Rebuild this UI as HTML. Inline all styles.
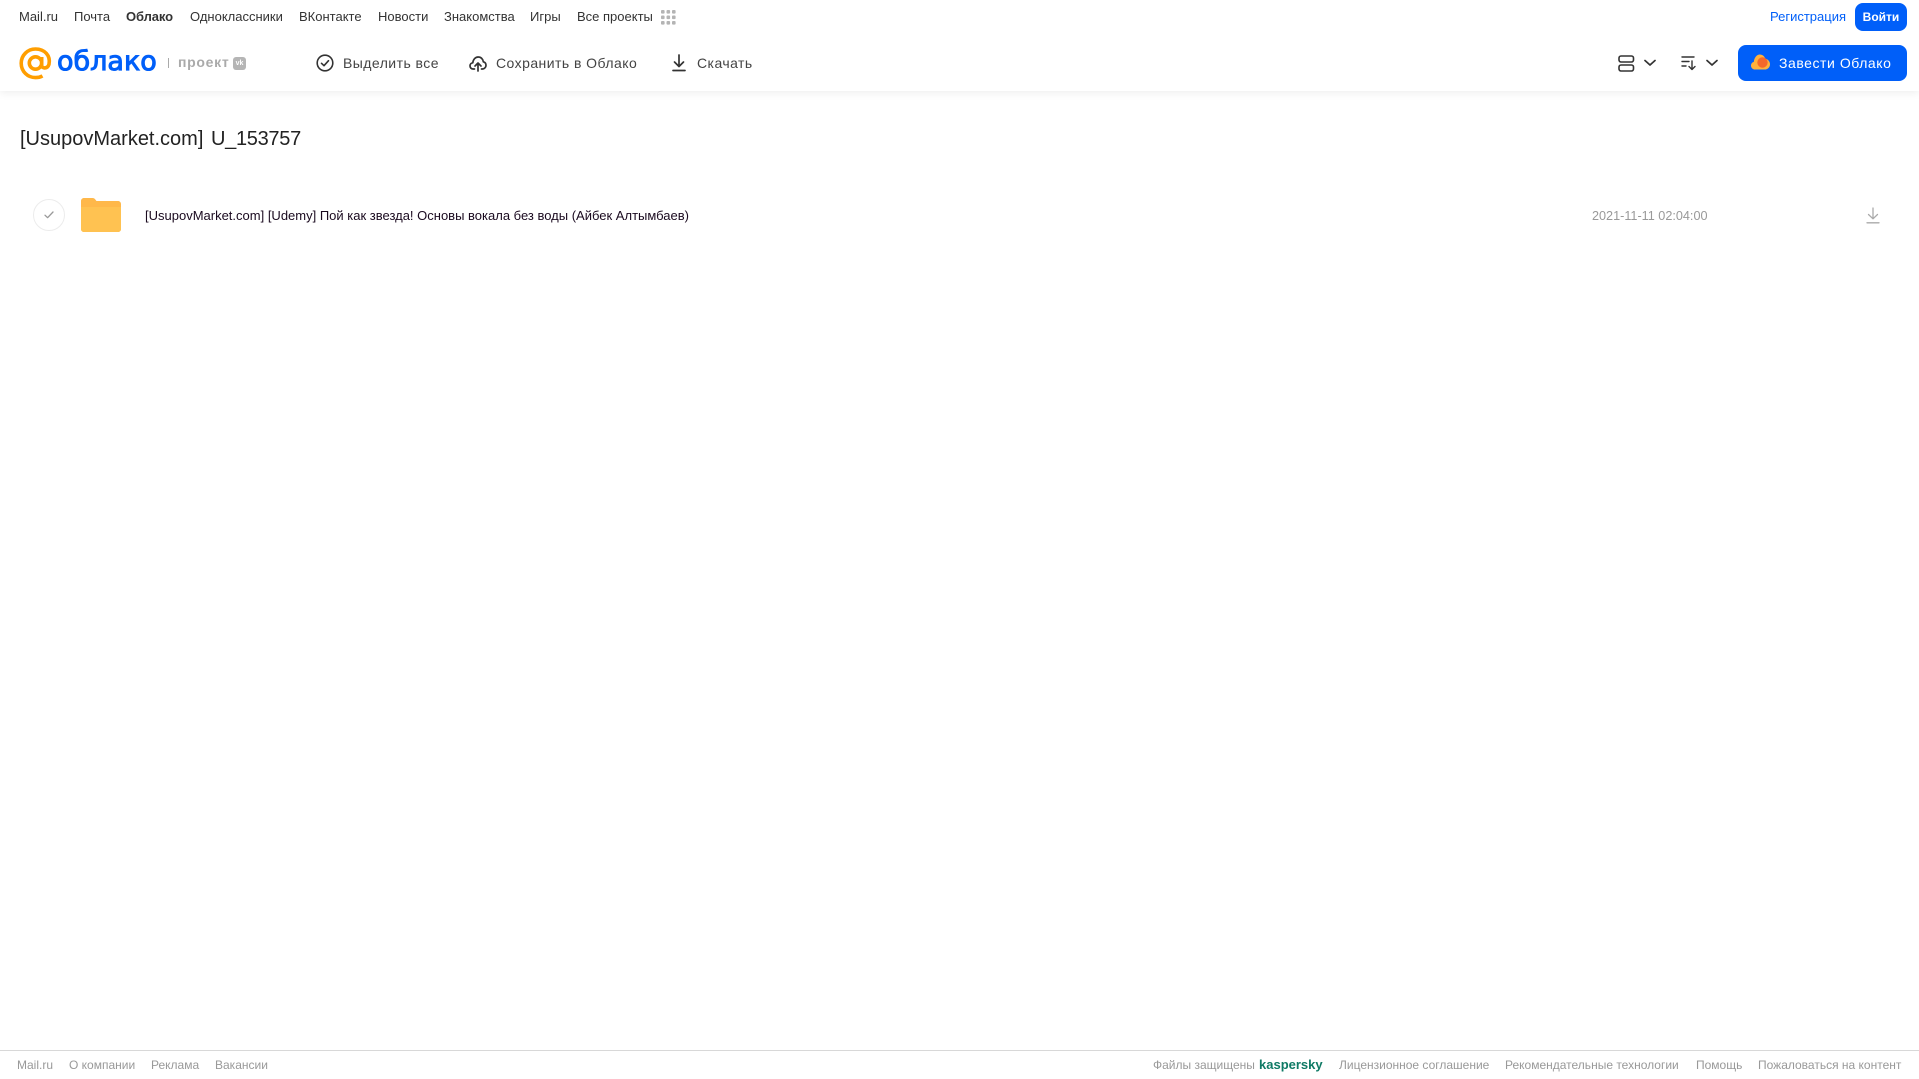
<!DOCTYPE html>
<html lang="ru"><head><meta charset="utf-8"><title>Облако</title>
<style>
html,body{margin:0;padding:0;background:#fff}
body{width:1919px;height:1079px;position:relative;overflow:hidden;font-family:"Liberation Sans",Arial,sans-serif}
.t{position:absolute;white-space:nowrap;line-height:16px}
.n{font-size:13px;color:#333;top:9px}
.a{font-size:14px;color:#444;top:55px;letter-spacing:.45px}
.f{font-size:12px;color:#999;top:1057px}
svg{position:absolute;overflow:visible}
#hdr{position:absolute;left:0;top:0;width:1919px;height:91px;background:#fff;box-shadow:0 2px 8px rgba(0,0,0,.07)}
</style></head><body>
<div id="hdr"></div>
<span class="t n" style="left:19px">Mail.ru</span>
<span class="t n" style="left:74px">Почта</span>
<span class="t n" style="left:126px;font-weight:bold;letter-spacing:-.1px">Облако</span>
<span class="t n" style="left:190px">Одноклассники</span>
<span class="t n" style="left:299px">ВКонтакте</span>
<span class="t n" style="left:378px">Новости</span>
<span class="t n" style="left:444px">Знакомства</span>
<span class="t n" style="left:530px">Игры</span>
<span class="t n" style="left:577px">Все проекты</span>
<svg style="left:661px;top:10px" width="15" height="15" fill="#b4b4b4"><rect x="0" y="0" width="3.6" height="3.6" rx="1"/><rect x="5.5" y="0" width="3.6" height="3.6" rx="1"/><rect x="11" y="0" width="3.6" height="3.6" rx="1"/><rect x="0" y="5.5" width="3.6" height="3.6" rx="1"/><rect x="5.5" y="5.5" width="3.6" height="3.6" rx="1"/><rect x="11" y="5.5" width="3.6" height="3.6" rx="1"/><rect x="0" y="11" width="3.6" height="3.6" rx="1"/><rect x="5.5" y="11" width="3.6" height="3.6" rx="1"/><rect x="11" y="11" width="3.6" height="3.6" rx="1"/></svg>
<span class="t" style="left:1770px;top:9px;font-size:13px;color:#005ff9">Регистрация</span>
<div style="position:absolute;left:1855px;top:3px;width:52px;height:28px;border-radius:8px;background:#005ff9;color:#fff;font-size:12px;font-weight:bold;text-align:center;line-height:28px">Войти</div>

<svg style="left:19px;top:47px" width="33" height="33" viewBox="0 0 33 33" fill="none" stroke="#ff9e00" stroke-width="3.600"><circle cx="16.500" cy="16" r="6.200"/><path d="M22.700 10v8.500c0 3.200 5.800 3.600 7.300-1.200C31.800 8.500 25.500 2 16.500 2 8.500 2 2.200 8.400 2.200 16.300 2.200 24.500 8.600 30.600 16.500 30.600c2.800 0 5-.6 7-1.700"/></svg>
<span class="t" style="left:57px;top:44px;font-size:27px;line-height:36px;color:#005ff9;-webkit-text-stroke:1px #005ff9;font-family:'DejaVu Sans',sans-serif">облако</span>
<div style="position:absolute;left:168px;top:58px;width:1px;height:10px;background:#aaa"></div>
<span class="t" style="left:178px;top:54px;font-size:14px;font-weight:bold;color:#aaa;letter-spacing:.7px">проект</span>
<div style="position:absolute;left:233px;top:57px;width:13px;height:13px;border-radius:3px;background:#b5b5b5;color:#fff;font-size:7px;font-weight:bold;line-height:13px;text-align:center">vk</div>

<svg style="left:316px;top:54px" width="18" height="18" viewBox="0 0 18 18" fill="none" stroke="#333" stroke-width="1.600"><circle cx="9" cy="9" r="7.800"/><path d="M5.500 9.300l2.500 2.400 4.500-5" stroke-linecap="round" stroke-linejoin="round"/></svg>
<span class="t a" style="left:343px">Выделить все</span>
<svg style="left:469px;top:54px" width="18" height="18" viewBox="0 0 18 18" fill="none" stroke="#333" stroke-width="1.700" stroke-linecap="round" stroke-linejoin="round"><path d="M5.500 15H4.200C2.300 15 1 13.600 1 11.900c0-1.600 1.100-2.900 2.800-3.100C4.100 5.500 6.300 3 9.200 3c2.800 0 4.800 2.100 5.100 4.800 1.700.4 2.700 1.800 2.700 3.400 0 2-1.500 3.800-3.500 3.800h-1"/><path d="M9 17V9.500M6 12l3-3 3 3"/></svg>
<span class="t a" style="left:496px">Сохранить в Облако</span>
<svg style="left:671px;top:54px" width="16" height="18" viewBox="0 0 16 18" fill="none" stroke="#333" stroke-width="1.700" stroke-linecap="round" stroke-linejoin="round"><path d="M8 1v11M3.500 8L8 12.500 12.500 8M2 16.500h12"/></svg>
<span class="t a" style="left:697px">Скачать</span>

<svg style="left:1618px;top:55px" width="17" height="17" viewBox="0 0 17 17" fill="none" stroke="#333" stroke-width="1.600"><rect x="1" y="1" width="14.500" height="6" rx="2"/><rect x="1" y="10" width="14.500" height="6" rx="2"/></svg>
<svg style="left:1644px;top:59px" width="12" height="8" viewBox="0 0 12 8" fill="none" stroke="#333" stroke-width="1.700" stroke-linecap="round" stroke-linejoin="round"><path d="M1 1.500l5 4.500 5-4.500"/></svg>
<svg style="left:1681px;top:55px" width="16" height="16" viewBox="0 0 16 16" fill="none" stroke="#333" stroke-width="1.400" stroke-linecap="round" stroke-linejoin="round"><path d="M1 2h12M1 6.500h7M1 11h4M11 6v8.500M8 11.500l3 3 3-3"/></svg>
<svg style="left:1706px;top:59px" width="12" height="8" viewBox="0 0 12 8" fill="none" stroke="#333" stroke-width="1.700" stroke-linecap="round" stroke-linejoin="round"><path d="M1 1.500l5 4.500 5-4.500"/></svg>
<div style="position:absolute;left:1738px;top:45px;width:169px;height:36px;border-radius:8px;background:#005ff9"></div>
<svg style="left:1751px;top:54px" width="19" height="16" viewBox="0 0 19 16"><path d="M4 15.500C1.800 15.500 0 13.800 0 11.600 0 9.800 1.100 8.400 2.800 7.900 3.200 3.500 6 .5 8.800.5c2.800 0 4.800 2 5.500 4.300 2.600.4 4.700 2.700 4.700 5.400 0 3-2.300 5.300-5.200 5.300z" fill="#ffb13d"/><circle cx="11.500" cy="8.500" r="5.200" fill="#f4682a"/></svg>
<span class="t a" style="left:1779px;color:#fff;letter-spacing:.55px">Завести Облако</span>

<span class="t" style="left:20px;top:127px;font-size:20px;line-height:24px;color:#222">[UsupovMarket.com]</span>
<span class="t" style="left:211px;top:127px;font-size:20px;line-height:24px;color:#222;letter-spacing:-.3px">U_153757</span>

<div style="position:absolute;left:33px;top:199px;width:30px;height:30px;border:1px solid #ececec;border-radius:50%"></div>
<svg style="left:44px;top:211px" width="10" height="8" viewBox="0 0 10 8" fill="none" stroke="#999" stroke-width="1.300" stroke-linecap="round" stroke-linejoin="round"><path d="M1 4.200l2.600 2.500L9 1"/></svg>
<svg style="left:81px;top:198px" width="40" height="34" viewBox="0 0 40 34"><path d="M0 3C0 1.300 1.300 0 3 0h8.500c1.500 0 2.300.7 3 1.700l1 1.300H37c1.700 0 3 1.300 3 3v25c0 1.700-1.300 3-3 3H3c-1.700 0-3-1.300-3-3z" fill="#ffb84a"/><path d="M0 9h40v22c0 1.700-1.300 3-3 3H3c-1.700 0-3-1.300-3-3z" fill="#ffc251"/></svg>
<span class="t" style="left:145px;top:208px;font-size:13px;color:#1a0a1f">[UsupovMarket.com] [Udemy] Пой как звезда! Основы вокала без воды (Айбек Алтымбаев)</span>
<span class="t" style="left:1592px;top:208px;font-size:12.650px;color:#999">2021-11-11 02:04:00</span>
<svg style="left:1866px;top:207px" width="14" height="17" viewBox="0 0 14 17" fill="none" stroke="#aaa" stroke-width="1.300" stroke-linecap="round" stroke-linejoin="round"><path d="M7 1v10.500M2.500 7.500L7 11.800l4.500-4.300M1 15.800h12"/></svg>

<div style="position:absolute;left:0;top:1050px;width:1919px;height:1px;background:#d8d8d8"></div>
<span class="t f" style="left:17px">Mail.ru</span>
<span class="t f" style="left:69px">О компании</span>
<span class="t f" style="left:151px">Реклама</span>
<span class="t f" style="left:215px">Вакансии</span>
<span class="t f" style="left:1153px">Файлы защищены</span>
<span class="t f" style="left:1259px;color:#0f7a65;font-weight:bold;font-size:13px">kaspersky</span>
<span class="t f" style="left:1339px">Лицензионное соглашение</span>
<span class="t f" style="left:1505px">Рекомендательные технологии</span>
<span class="t f" style="left:1696px">Помощь</span>
<span class="t f" style="left:1758px">Пожаловаться на контент</span>
</body></html>
